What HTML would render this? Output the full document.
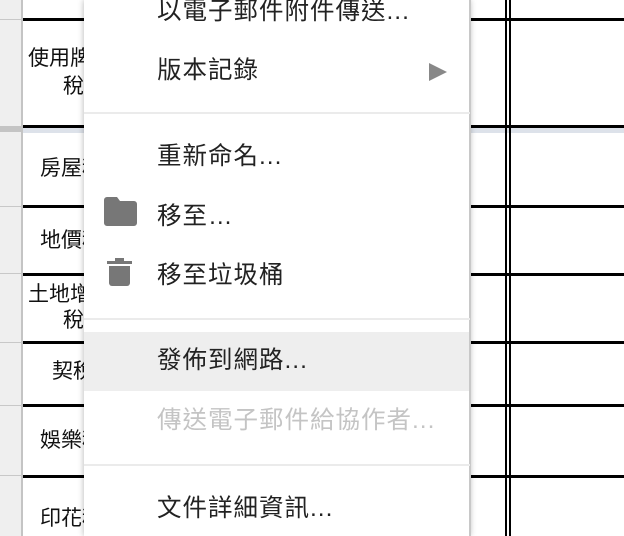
<!DOCTYPE html><html><head><meta charset="utf-8"><style>
body{margin:0;width:624px;height:536px;overflow:hidden;background:#fff;position:relative;font-family:"Liberation Sans","Noto Sans CJK TC",sans-serif}
.a{position:absolute}
.hl{position:absolute;height:3px;background:#000}
.gl{position:absolute;left:0;width:22px;height:1px;background:#c8c8c8}
.ct{position:absolute;font-size:21px;color:#111;white-space:nowrap;line-height:26px}
.mi{position:absolute;left:157px;font-size:24.5px;letter-spacing:1px;color:#222;line-height:30px;white-space:nowrap}
.sep{position:absolute;left:84px;width:386px;height:2px;background:#ebebeb}
</style></head><body>
<div class="a" style="left:0;top:0;width:22px;height:536px;background:#efefef"></div>
<div class="a" style="left:21px;top:0;width:2px;height:536px;background:#c4c4c4"></div>
<div class="a" style="left:0;top:126px;width:22px;height:6px;background:#c4c4c4"></div>
<div class="a" style="left:23px;top:127px;width:601px;height:6px;background:#dde2ea"></div>
<div class="gl" style="top:19px"></div><div class="gl" style="top:206px"></div><div class="gl" style="top:273px"></div><div class="gl" style="top:342px"></div><div class="gl" style="top:405px"></div><div class="gl" style="top:475px"></div>
<div class="hl" style="left:23px;width:601px;top:18px"></div>
<div class="hl" style="left:23px;width:601px;top:125px"></div>
<div class="hl" style="left:23px;width:601px;top:205px"></div>
<div class="hl" style="left:23px;width:601px;top:273px"></div>
<div class="hl" style="left:23px;width:601px;top:341px"></div>
<div class="hl" style="left:23px;width:601px;top:404px"></div>
<div class="hl" style="left:23px;width:601px;top:475px"></div>
<div class="a" style="left:505px;top:0;width:2px;height:536px;background:#000"></div>
<div class="a" style="left:509px;top:0;width:2px;height:536px;background:#000"></div>
<div class="ct" style="left:28px;top:46px">使用牌照</div>
<div class="ct" style="left:63px;top:74px">稅</div>
<div class="ct" style="left:40px;top:156px">房屋稅</div>
<div class="ct" style="left:40px;top:228px">地價稅</div>
<div class="ct" style="left:28px;top:282px">土地增值</div>
<div class="ct" style="left:63px;top:308px">稅</div>
<div class="ct" style="left:52px;top:359px">契稅</div>
<div class="ct" style="left:40px;top:428px">娛樂稅</div>
<div class="ct" style="left:40px;top:506px">印花稅</div>
<div class="a" style="left:84px;top:0;width:386px;height:536px;background:#fff;box-shadow:0 0 6px rgba(0,0,0,.3)"></div>
<div class="a" style="left:469px;top:0;width:2px;height:536px;background:#c8c8c8"></div>
<div class="a" style="left:84px;top:332px;width:385px;height:59px;background:#eee"></div>
<div class="sep" style="top:112px"></div><div class="sep" style="top:318px"></div><div class="sep" style="top:464px"></div>
<div class="mi" style="top:-3px">以電子郵件附件傳送...</div>
<div class="mi" style="top:56px">版本記錄</div>
<div class="a" style="left:429px;top:63px;width:0;height:0;border-left:18px solid #888;border-top:9px solid transparent;border-bottom:9px solid transparent"></div>
<div class="mi" style="top:142px">重新命名...</div>
<svg class="a" style="left:104px;top:197px" width="33" height="29" viewBox="0 0 33 29"><path d="M3 0h10l3 4h14a3 3 0 0 1 3 3v19a3 3 0 0 1-3 3H3a3 3 0 0 1-3-3V3a3 3 0 0 1 3-3z" fill="#777"/></svg>
<div class="mi" style="top:202px">移至…</div>
<svg class="a" style="left:107px;top:258px" width="25" height="28" viewBox="0 0 25 28"><rect x="0" y="3" width="25" height="3" fill="#777"/><rect x="8" y="0" width="9" height="3" fill="#777"/><path d="M2 8h21v17a3 3 0 0 1-3 3H5a3 3 0 0 1-3-3z" fill="#777"/></svg>
<div class="mi" style="top:261px">移至垃圾桶</div>
<div class="mi" style="top:346px">發佈到網路...</div>
<div class="mi" style="top:406px;color:#c4c4c4">傳送電子郵件給協作者...</div>
<div class="mi" style="top:494px">文件詳細資訊...</div>
</body></html>
